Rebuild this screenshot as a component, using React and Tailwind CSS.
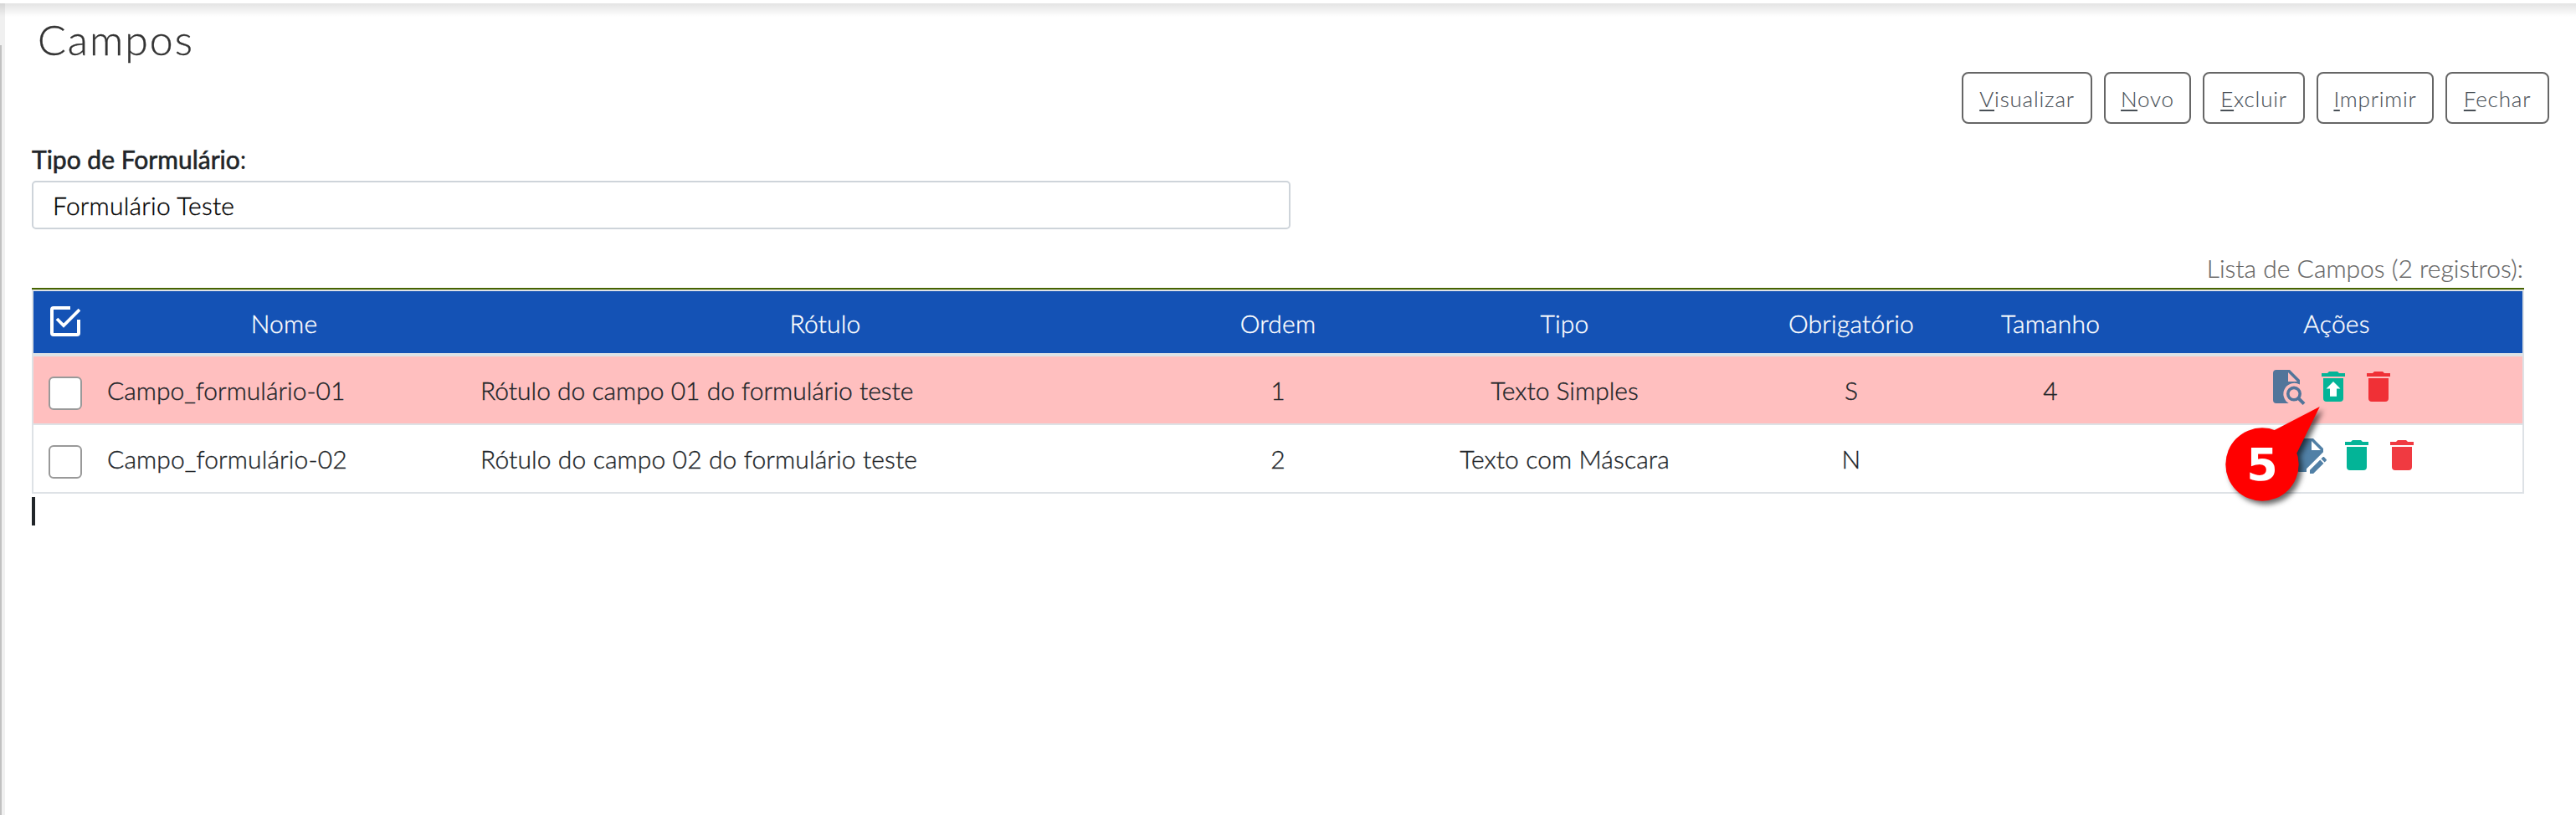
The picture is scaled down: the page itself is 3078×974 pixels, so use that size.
const TRASH =
  "M19,4H15.5L14.5,3H9.5L8.5,4H5V6H19M6,19A2,2 0 0,0 8,21H16A2,2 0 0,0 18,19V7H6V19Z";

function Icon({ className, children }) {
  return (
    <svg viewBox="0 0 24 24" className={`h-12 w-12 shrink-0 fill-current ${className}`}>
      {children}
    </svg>
  );
}

function TrashIcon({ className }) {
  return (
    <Icon className={className}>
      <path d={TRASH} />
    </Icon>
  );
}

function RestoreIcon({ className }) {
  return (
    <Icon className={className}>
      <path d={TRASH} />
      <path fill="#fff" d="M12 9L16.2 13.2H14V17.9H10V13.2H7.8Z" />
    </Icon>
  );
}

function FileSearchIcon({ className }) {
  return (
    <Icon className={className}>
      <path
        fillRule="evenodd"
        d="M6 2H14L20 8V10.8A6.5 6.5 0 1 0 13.4 22H6A2 2 0 0 1 4 20V4A2 2 0 0 1 6 2ZM13 3.5V9H18.5Z"
      />
      <circle cx="16.5" cy="16.3" r="3.6" fill="none" stroke="currentColor" strokeWidth="1.8" />
      <path d="M19 18.8L22.5 22.3" fill="none" stroke="currentColor" strokeWidth="2" />
    </Icon>
  );
}

function FileEditIcon({ className }) {
  return (
    <Icon className={className}>
      <path d="M6,2C4.89,2 4,2.89 4,4V20A2,2 0 0,0 6,22H10V20.1L20,10.1V8L14,2H6M13,3.5L18.5,9H13V3.5M20.15,13C20,13 19.86,13.05 19.75,13.16L18.73,14.18L20.82,16.26L21.84,15.25C22.05,15.03 22.05,14.67 21.84,14.46L20.54,13.16C20.43,13.05 20.29,13 20.15,13M18.14,14.77L12,20.92V23H14.08L20.23,16.85L18.14,14.77Z" />
    </Icon>
  );
}

function CheckAllIcon() {
  return (
    <svg viewBox="0 0 36 36" className="h-9 w-9 fill-none stroke-white">
      <path d="M24 2H4Q2 2 2 4V32Q2 34 4 34H32Q34 34 34 32V16" strokeWidth="4" />
      <path d="M8 15L16 23L35 4" strokeWidth="3.8" />
    </svg>
  );
}

const buttons = [
  ["V", "isualizar", "w-[156px]"],
  ["N", "ovo", "w-[104px]"],
  ["E", "xcluir", "w-[122px]"],
  ["I", "mprimir", "w-[140px]"],
  ["F", "echar", "w-[124px]"],
];

const headers = ["Nome", "Rótulo", "Ordem", "Tipo", "Obrigatório", "Tamanho", "Ações"];
const GRID =
  "grid grid-cols-[76px_447px_846px_236px_449px_236px_240px_444px] items-center";

function Row({ data, className, children }) {
  return (
    <div className={`${GRID} h-20 ${className}`}>
      <div className="pl-[18px] pt-2">
        <div className="h-10 w-10 rounded-[6px] border-2 border-[#999] bg-white" />
      </div>
      <div className="pl-3">{data[0]}</div>
      <div className="pl-[11px]">{data[1]}</div>
      {data.slice(2).map((value, i) => (
        <div key={i} className="text-center">
          {value}
        </div>
      ))}
      {children}
    </div>
  );
}

export default function App() {
  return (
    <div className="relative flex h-[974px] w-[3078px] overflow-hidden bg-white font-['Lato',sans-serif] text-[30px] font-light leading-10 text-[#212529] [-webkit-text-stroke:0.35px]">
      <div className="w-[6px] shrink-0 bg-[#f0f0f0] pt-[54px]">
        <div className="h-full w-[2px] bg-[#c1c1c1]" />
      </div>
      <div className="absolute inset-x-0 top-0 h-1 bg-white" />
      <div className="absolute inset-x-0 top-1 h-[16px] bg-linear-to-b from-black/11 to-transparent" />

      <div className="flex w-[3040px] flex-col pl-8">
        <h1 className="mt-[23px] pl-[7px] text-[50px] leading-[48px] tracking-[2px] text-[#333]">
          Campos
        </h1>
        <div className="mt-[15px] flex h-[62px] justify-end gap-[14px]">
          {buttons.map(([key, rest, width]) => (
            <button
              key={rest}
              className={`${width} rounded-[8px] border-2 border-[#666] pt-px text-center text-[26px] leading-[56px] tracking-[0.8px] text-[#495057] [-webkit-text-stroke:0.1px]`}
            >
              <span className="underline decoration-2 underline-offset-[3px]">{key}</span>
              {rest}
            </button>
          ))}
        </div>
        <label className="mt-[22px] font-normal leading-10 [-webkit-text-stroke:0.6px]">
          Tipo de Formulário<span className="[-webkit-text-stroke:0]">:</span>
        </label>
        <div className="mt-[6px] h-[58px] w-[1504px] rounded-[5px] border-2 border-[#ced4da] pl-[23px] leading-[54px] tracking-[0.2px] text-black">
          Formulário Teste
        </div>
        <div className="mt-[26px] h-[44px] w-[2977px] text-right leading-10 text-[#666] [-webkit-text-stroke:0.2px]">
          Lista de Campos (2 registros):
        </div>

        <div className="w-[2978px] border-t-2 border-[#466400]">
          <div className="border-2 border-[#dee2e6]">
            <div className={`${GRID} h-[74px] bg-[#1452b5] text-white`}>
              <div className="-mt-0.5 pl-5">
                <CheckAllIcon />
              </div>
              {headers.map((h) => (
                <div key={h} className="pt-px text-center tracking-[0.2px]">
                  {h}
                </div>
              ))}
            </div>
            <div className="h-1 bg-[#dee2e6]" />
            <Row
              className="bg-[#ffbfbf]"
              data={["Campo_formulário-01", "Rótulo do campo 01 do formulário teste", "1", "Texto Simples", "S", "4"]}
            >
              <div className="flex h-20 gap-[6px] pl-[138px] pt-3">
                <FileSearchIcon className="mr-[2px] text-[#52759a]" />
                <RestoreIcon className="text-[#03b497]" />
                <TrashIcon className="text-[#f03036]" />
              </div>
            </Row>
            <div className="h-[2px] bg-[#dee2e6]" />
            <Row
              className="bg-white tracking-[0.12px]"
              data={["Campo_formulário-02", "Rótulo do campo 02 do formulário teste", "2", "Texto com Máscara", "N", ""]}
            >
              <div className="flex h-20 gap-[6px] pl-[110px] pt-3">
                <FileSearchIcon className="mr-[2px] text-[#5180a6]" />
                <FileEditIcon className="mr-[2px] text-[#5180a6]" />
                <TrashIcon className="text-[#03b497]" />
                <TrashIcon className="text-[#f03a41]" />
              </div>
            </Row>
          </div>
        </div>
        <div className="mt-1 h-[34px] w-1 bg-[#212529]" />
      </div>

      <div className="absolute left-[2650px] top-[476px] h-[144px] w-[140px] [-webkit-text-stroke:0]">
        <svg
          viewBox="0 0 140 144"
          className="h-full w-full overflow-visible fill-[#ff0000] drop-shadow-[4px_4px_3px_rgba(0,0,0,0.6)]"
        >
          <circle cx="53" cy="79" r="43.7" />
          <path d="M67.3 38.2L121.8 10L94.7 65L60 80Z" />
        </svg>
        <span className="absolute left-[9px] top-[40px] w-[88px] text-center font-['DejaVu_Sans',sans-serif] text-[54px] font-bold leading-[80px] text-white">
          5
        </span>
      </div>
    </div>
  );
}
